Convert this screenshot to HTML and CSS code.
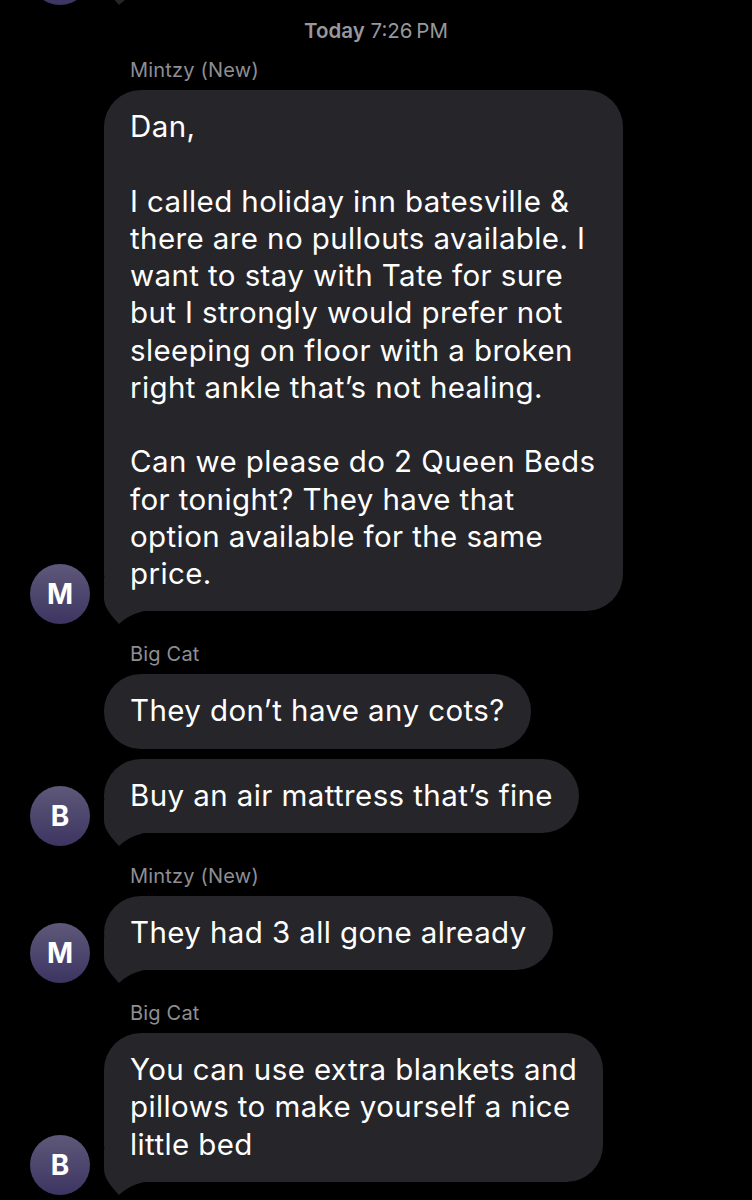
FILE: index.html
```html
<!DOCTYPE html>
<html lang="en">
<head>
<meta charset="utf-8">
<title>Messages</title>
<link rel="stylesheet" href="styles.css">
</head>
<body>
<div class="thread">
  <div class="row prev">
    <div class="avatar"></div>
    <div class="bubble"><svg class="tail" width="40" height="46" viewBox="0 0 40 46"><path d="M0 0 L0 20 C0 30 8 38 15 46 C20 41 28 36 40 33 L40 0 Z"/></svg></div>
  </div>

  <div class="timestamp"><span class="day">Today</span> 7:26&#8201;PM</div>

  <div class="group first">
    <div class="name">Mintzy (New)</div>
    <div class="row">
      <div class="avatar">M</div>
      <div class="bubble full">Dan,<br><br>I called holiday inn batesville &amp;<br>there are no pullouts available. I<br>want to stay with Tate for sure<br>but I strongly would prefer not<br>sleeping on floor with a broken<br>right ankle that’s not healing.<br><br>Can we please do 2 Queen Beds<br>for tonight? They have that<br>option available for the same<br>price.<svg class="tail" width="40" height="46" viewBox="0 0 40 46"><path d="M0 0 L0 20 C0 30 8 38 15 46 C20 41 28 36 40 33 L40 0 Z"/></svg></div>
    </div>
  </div>

  <div class="group">
    <div class="name">Big Cat</div>
    <div class="row">
      <div class="avatar hidden"></div>
      <div class="bubble">They don’t have any cots?</div>
    </div>
    <div class="row">
      <div class="avatar">B</div>
      <div class="bubble">Buy an air mattress that’s fine<svg class="tail" width="40" height="46" viewBox="0 0 40 46"><path d="M0 0 L0 20 C0 30 8 38 15 46 C20 41 28 36 40 33 L40 0 Z"/></svg></div>
    </div>
  </div>

  <div class="group">
    <div class="name">Mintzy (New)</div>
    <div class="row">
      <div class="avatar">M</div>
      <div class="bubble">They had 3 all gone already<svg class="tail" width="40" height="46" viewBox="0 0 40 46"><path d="M0 0 L0 20 C0 30 8 38 15 46 C20 41 28 36 40 33 L40 0 Z"/></svg></div>
    </div>
  </div>

  <div class="group">
    <div class="name">Big Cat</div>
    <div class="row">
      <div class="avatar">B</div>
      <div class="bubble">You can use extra blankets and<br>pillows to make yourself a nice<br>little bed<svg class="tail" width="40" height="46" viewBox="0 0 40 46"><path d="M0 0 L0 20 C0 30 8 38 15 46 C20 41 28 36 40 33 L40 0 Z"/></svg></div>
    </div>
  </div>
</div>
</body>
</html>
```

FILE: styles.css
```css
html, body {
  margin: 0;
  padding: 0;
  background: #000;
}
body {
  width: 752px;
  height: 1200px;
  overflow: hidden;
  font-family: Inter, "Liberation Sans", sans-serif;
  color: #fff;
}
.thread {
  padding-left: 30px;
  display: flex;
  flex-direction: column;
}
.row {
  display: flex;
  align-items: flex-end;
  gap: 14px;
}
.row + .row {
  margin-top: 10px;
}
.prev {
  margin-top: -82px;
}
.avatar {
  flex: none;
  width: 60px;
  height: 60px;
  margin-bottom: -13px;
  border-radius: 50%;
  background: linear-gradient(180deg, #5e5879 0%, #3d3562 100%);
  color: #fff;
  font-size: 28px;
  font-weight: 700;
  display: flex;
  align-items: center;
  justify-content: center;
  position: relative;
  z-index: 1;
}
.avatar.hidden {
  visibility: hidden;
}
.bubble {
  position: relative;
  z-index: 0;
  box-sizing: border-box;
  max-width: 519px;
  background: #262529;
  border-radius: 37px;
  padding: 18px 26px 19px;
  font-size: 29.5px;
  line-height: 37.25px;
  letter-spacing: 0.4px;
}
.bubble.full {
  width: 519px;
}
.prev .bubble {
  width: 300px;
  height: 74px;
}
.tail {
  position: absolute;
  z-index: -1;
  left: 0;
  bottom: -13px;
  fill: #262529;
}
.timestamp {
  margin-top: 27px;
  text-align: center;
  margin-left: -30px;
  font-size: 20.5px;
  line-height: 24px;
  color: #97979c;
}
.day {
  font-weight: 600;
}
.group {
  margin-top: 31px;
}
.group.first {
  margin-top: 15px;
}
.name {
  margin-left: 100px;
  margin-bottom: 8px;
  font-size: 20px;
  letter-spacing: 0.2px;
  line-height: 24px;
  color: #8e8e93;
}
```
